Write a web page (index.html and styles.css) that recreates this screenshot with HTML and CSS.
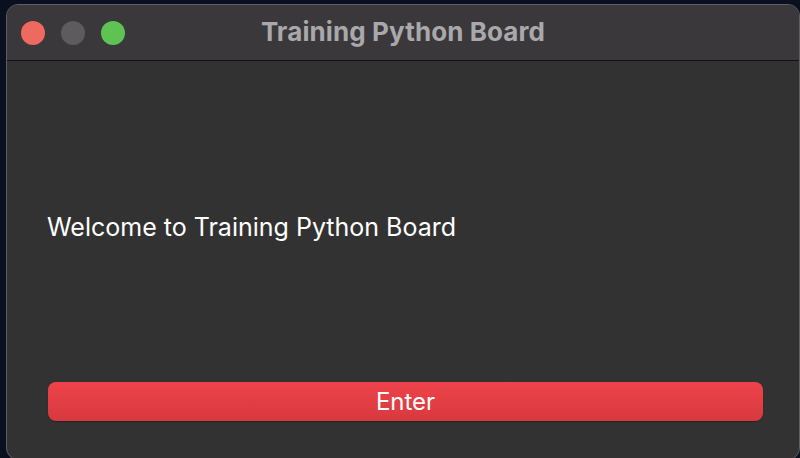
FILE: index.html
```html
<!DOCTYPE html>
<html>
<head>
<meta charset="utf-8">
<link rel="stylesheet" href="styles.css">
</head>
<body>
<div class="window">
  <div class="titlebar">
    <div class="lights">
      <span class="light red"></span>
      <span class="light gray"></span>
      <span class="light green"></span>
    </div>
    <div class="title">Training Python Board</div>
  </div>
  <div class="content">
    <div class="welcome">Welcome to Training Python Board</div>
    <button class="enter">Enter</button>
  </div>
</div>
</body>
</html>
```
FILE: styles.css
```css
html, body {
  margin: 0;
  padding: 0;
  width: 800px;
  height: 458px;
  overflow: hidden;
  background: #0b1020;
  font-family: "Inter", "Liberation Sans", sans-serif;
}
.window {
  margin: 4px 0 0 6px;
  width: 794px;
  height: 456px;
  box-sizing: border-box;
  border: 1px solid #5f5f61;
  border-radius: 12px;
  overflow: hidden;
  background: #323232;
  display: flex;
  flex-direction: column;
}
.titlebar {
  position: relative;
  height: 55px;
  flex: none;
  background: #3a383b;
  border-bottom: 1px solid #111;
  display: flex;
  align-items: center;
  justify-content: center;
}
.lights {
  position: absolute;
  left: 14px;
  top: 16px;
  display: flex;
  gap: 16px;
}
.light {
  width: 24px;
  height: 24px;
  border-radius: 50%;
}
.red { background: #ee6a5f; }
.gray { background: #5c5c5c; }
.green { background: #5fc354; }
.title {
  color: #a9a8aa;
  font-weight: 700;
  font-size: 26px;
  letter-spacing: 0.1px;
  margin-top: -2px;
}
.content {
  flex: 1;
  display: flex;
  flex-direction: column;
  padding: 0 36px 0 40px;
}
.welcome {
  margin-top: 151px;
  color: #ffffff;
  font-size: 25px;
  line-height: 30px;
}
.enter {
  margin-top: 140px;
  margin-left: 1px;
  height: 39px;
  border: none;
  border-radius: 8px;
  background: linear-gradient(#ef434a, #d6393f);
  color: #ffffff;
  font-family: "Inter", "Liberation Sans", sans-serif;
  font-size: 24px;
  padding: 0;
  box-shadow: 0 1px 1px rgba(0,0,0,0.3);
}
```
